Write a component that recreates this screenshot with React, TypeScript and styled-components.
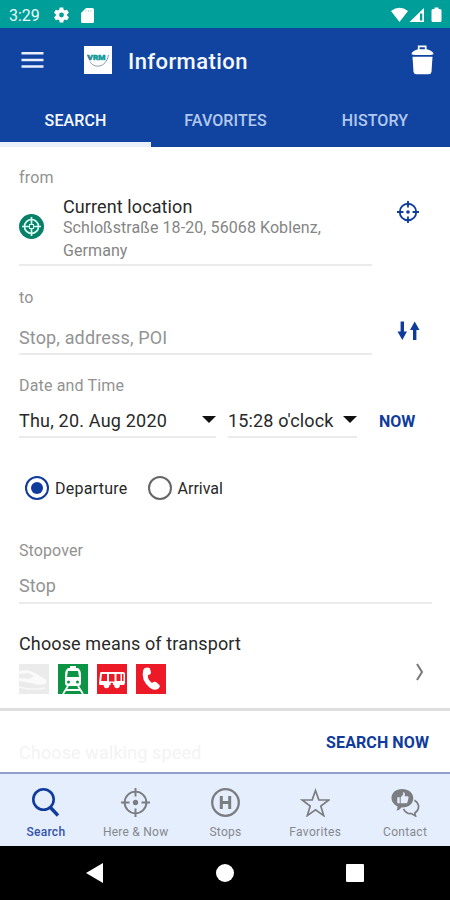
import React from "react";
import styled, { createGlobalStyle } from "styled-components";

const BLUE = "#1144a0";
const INK = "#0f3b9c";
const GREY = "#7b7d80";

const GlobalStyle = createGlobalStyle`
  * { box-sizing: border-box; }
  body { margin: 0; background: #fff; font-family: Roboto, "Liberation Sans", sans-serif; }
  svg { display: block; flex: none; }
  h1 { margin: 0; }
  button { background: none; border: 0; padding: 0; margin: 0; font: inherit; color: inherit; }
`;

const Screen = styled.div`
  width: 450px;
  height: 900px;
  display: flex;
  flex-direction: column;
  overflow: hidden;
  background: #fff;
`;

const Text = styled.span<{ $size: number; $color?: string; $spacing?: number; $weight?: number; $line?: number }>`
  display: block;
  white-space: nowrap;
  font-size: ${(p) => p.$size}px;
  line-height: ${(p) => p.$line ?? 20}px;
  color: ${(p) => p.$color ?? "#292929"};
  letter-spacing: ${(p) => p.$spacing ?? 0}px;
  font-weight: ${(p) => p.$weight ?? 400};
`;

const StatusBar = styled.header`
  height: 28px;
  flex: none;
  background: #009e99;
  display: flex;
  align-items: center;
  padding: 2px 8px 0 9px;
`;
const StatusIcons = styled.div`
  display: flex;
  align-items: center;
  margin-left: auto;
`;
const Clock = styled.div`
  padding-top: 1px;
`;
const StatusLeft = styled.div`
  display: flex;
  align-items: center;
  gap: 12px;
  margin-left: 14px;
`;

const AppBar = styled.div`
  height: 64px;
  flex: none;
  background: ${BLUE};
  display: flex;
  align-items: center;
  padding: 0 16px 0 21px;
`;
const Logo = styled.div`
  width: 28px;
  height: 28px;
  margin: 0 16px 0 40px;
  background: #fff;
`;
const Title = styled.div`
  padding-top: 3px;
`;
const TrashButton = styled.button`
  margin-left: auto;
`;

const Tabs = styled.nav`
  height: 55px;
  flex: none;
  background: ${BLUE};
  display: grid;
  grid-template-columns: 151px 1fr 150px;
`;
const Tab = styled.button<{ $active?: boolean }>`
  display: flex;
  justify-content: center;
  align-items: flex-start;
  padding-top: 19px;
  border-bottom: 5px solid ${(p) => (p.$active ? "#e9f0fa" : BLUE)};
`;

const Form = styled.main`
  height: 561px;
  flex: none;
  padding: 21px 18px 0 19px;
  overflow: hidden;
`;
const FieldRow = styled.div<{ $height: number; $top?: number }>`
  height: ${(p) => p.$height}px;
  margin-top: ${(p) => p.$top ?? 0}px;
  display: flex;
`;
const Field = styled.div<{ $width: number; $align?: string; $drop?: number }>`
  width: ${(p) => p.$width}px;
  flex: none;
  display: flex;
  align-items: ${(p) => p.$align ?? "center"};
  padding-top: ${(p) => p.$drop ?? 0}px;
  border-bottom: 2px solid #ebebeb;
`;
const PlaceIcon = styled.div`
  margin-top: 26px;
`;
const Place = styled.div`
  margin-left: 19px;
  padding-top: 9px;
`;
const SideButton = styled.button<{ $top: number }>`
  margin: ${(p) => p.$top}px 0 0 25px;
  align-self: flex-start;
`;
const Caret = styled.i`
  margin: -2px 0 0 auto;
  border: 7px solid transparent;
  border-top: 7px solid #111;
  border-bottom: 0;
`;
const Gap = styled.div`
  width: 12px;
  flex: none;
`;
const NowButton = styled.button`
  margin: 3px 0 0 22px;
`;
const Choices = styled.div`
  display: flex;
  align-items: center;
  height: 26px;
  margin: 37px 0 0 6px;
`;
const Choice = styled.label`
  display: flex;
  align-items: center;
  gap: 6px;
  margin-right: 20px;
`;
const Radio = styled.span<{ $on?: boolean }>`
  width: 24px;
  height: 24px;
  border-radius: 50%;
  border: 2px solid ${(p) => (p.$on ? INK : "#666")};
  display: grid;
  place-items: center;
  &::after {
    content: "";
    width: 12px;
    height: 12px;
    border-radius: 50%;
    background: ${(p) => (p.$on ? INK : "transparent")};
  }
`;
const ChoiceLabel = styled.div`
  padding-top: 2px;
`;
const Modes = styled.div`
  display: flex;
  gap: 9px;
  margin-top: 10px;
`;
const Mode = styled.div<{ $bg: string }>`
  width: 30px;
  height: 30px;
  background: ${(p) => p.$bg};
`;
const Chevron = styled.div`
  margin: -1px 8px 0 auto;
`;

const ActionBar = styled.div`
  height: 64px;
  flex: none;
  border-top: 3px solid #dedede;
  display: flex;
  justify-content: space-between;
  align-items: flex-start;
  padding: 22px 21px 0 19px;
`;
const Faded = styled.div`
  margin-top: 10px;
`;

const BottomNav = styled.nav`
  height: 74px;
  flex: none;
  background: #e5eefd;
  border-top: 2px solid #929ecb;
  display: grid;
  grid-template-columns: repeat(5, 1fr);
  padding-left: 1px;
`;
const NavItem = styled.button`
  display: flex;
  flex-direction: column;
  align-items: center;
  padding-top: 14px;
  gap: 6px;
`;

const SystemBar = styled.footer`
  height: 54px;
  flex: none;
  background: #000;
  display: flex;
  align-items: center;
  justify-content: space-between;
  padding: 0 86px;
`;

const Crosshair = ({ size, color, width = 2, dot = 2 }: { size: number; color: string; width?: number; dot?: number }) => (
  <svg width={size} height={size} viewBox="0 0 24 24" fill="none" stroke={color} strokeWidth={width}>
    <circle cx="12" cy="12" r="9" />
    <path d="M12 0v7M12 17v7M0 12h7M17 12h7" />
    <circle cx="12" cy="12" r={dot} fill={color} stroke="none" />
  </svg>
);

const navItems: { label: string; spacing: number; icon: React.ReactNode; active?: boolean }[] = [
  {
    label: "Search",
    spacing: 0.3,
    active: true,
    icon: (
      <svg width="28" height="29" viewBox="0 0 28 29" fill="none" stroke={INK} strokeWidth="2.6">
        <circle cx="11.5" cy="11.5" r="10.2" />
        <path d="M18 19L26 27.5" strokeWidth="3.3" />
      </svg>
    ),
  },
  { label: "Here & Now", spacing: 0.25, icon: <Crosshair size={29} color={GREY} width={1.6} dot={2.2} /> },
  {
    label: "Stops",
    spacing: 0.3,
    icon: (
      <svg width="30" height="29" viewBox="0 0 30 29" fill="none" stroke={GREY}>
        <circle cx="15.5" cy="14.5" r="13.3" strokeWidth="2.3" />
        <path d="M11.3 8v13M19.7 8v13M11.3 14.5h8.400" strokeWidth="3" />
      </svg>
    ),
  },
  {
    label: "Favorites",
    spacing: 0.35,
    icon: (
      <svg width="30" height="29" viewBox="0 0 30 29" fill="none" stroke={GREY} strokeWidth="1.7">
        <path d="M15.500 2.500l3.300 9.300 10 .200-8 6 2.900 9.600-8.200-5.700-8.200 5.700 2.900-9.600-8-6 10-.200z" />
      </svg>
    ),
  },
  {
    label: "Contact",
    spacing: 0.3,
    icon: (
      <svg width="30" height="29" viewBox="0 0 30 29" fill="none">
        <path d="M12 1C5.700 1 1.500 4.900 1.500 10.200c0 3.300 2 6 6 8.200 0 2-.5 3.200-1.200 4.200 2.600-.6 4.200-1.800 5-3.200 7.600.3 12-3.900 12-9.200S18.500 1 12 1z" fill={GREY} />
        <path d="M7.300 9.200h2.400v6H7.300zM10.700 9.200l2.400-2.400V4.200c1.800-.2 2.200 1.700 1.500 4h2.900c1 0 1.300.8 1 1.700l-1 4c-.2.8-.7 1.300-1.500 1.300h-5.300z" fill="#e5eefd" />
        <path d="M24.500 12.200c4.200 2.500 5.300 7.300 2.600 10.700-1 1.200-2 1.600-2.300 2.200l.7 2.800-4.100-2.300c-3.500.4-6-1.300-7.900-4.800" stroke={GREY} strokeWidth="1.700" />
      </svg>
    ),
  },
];

export default function App() {
  return (
    <>
      <GlobalStyle />
      <Screen>
        <StatusBar>
          <Clock><Text $size={16} $color="#e8faf8">3:29</Text></Clock>
          <StatusLeft>
            <svg width="15" height="16" viewBox="2 2 20 20" fill="#fff">
              <path d="M19.400 13c.1-.3.1-.6.1-1s0-.7-.1-1l2.100-1.600c.2-.2.3-.4.1-.7l-2-3.400c-.1-.2-.4-.3-.6-.2l-2.500 1c-.5-.4-1.100-.7-1.700-1L14.400 2.400c0-.2-.2-.4-.5-.4h-4c-.2 0-.4.2-.5.4L9 5.100c-.6.3-1.200.6-1.700 1l-2.500-1c-.2-.1-.5 0-.6.2l-2 3.400c-.1.2-.1.5.1.7L4.500 11c-.1.3-.1.7-.1 1s0 .7.1 1l-2.100 1.600c-.2.2-.3.4-.1.7l2 3.400c.1.2.4.3.6.2l2.500-1c.5.4 1.100.7 1.700 1l.4 2.700c0 .2.2.4.5.4h4c.2 0 .4-.2.5-.4l.4-2.700c.6-.3 1.200-.6 1.700-1l2.500 1c.2.1.5 0 .6-.2l2-3.400c.1-.2.1-.5-.1-.7zM12 15.200a3.200 3.200 0 1 1 0-6.400 3.200 3.200 0 0 1 0 6.400z" />
            </svg>
            <svg width="13" height="15" viewBox="0 0 13 15">
              <path d="M5 0h6.500Q13 0 13 1.500v12Q13 15 11.500 15h-10Q0 15 0 13.500V5z" fill="#fff" />
              <path d="M5 2v2M7.500 2v2M10 2v2" stroke="#b5e0de" strokeWidth="1" />
            </svg>
          </StatusLeft>
          <StatusIcons>
            <svg width="51" height="16" viewBox="0 0 51 16" fill="#fff">
              <path d="M0 4Q8.500 -2.500 17 4L8.500 15z" />
              <path d="M33 1v14H18.500z" />
              <path d="M29 6.500h2.300v7H29z" fill="#009e99" />
              <path d="M43.500 0.500h4V2H49q1.500 0 1.500 1.500v10Q50.500 15 49 15h-7q-1.500 0-1.500-1.500v-10Q40.500 2 42 2h1.500z" />
            </svg>
          </StatusIcons>
        </StatusBar>

        <AppBar>
          <svg width="23" height="18" viewBox="0 0 23 18" stroke="#e8f0ff" strokeWidth="2.5">
            <path d="M0.500 2.200h22M0.500 8.900h22M0.500 15.500h22" />
          </svg>
          <Logo>
            <svg width="28" height="28" viewBox="0 0 28 28" fill="none">
              <text x="3.500" y="14.300" fontSize="6.500" fontWeight="900" fill="#159a9a" stroke="#159a9a" strokeWidth=".4" textLength="18" lengthAdjust="spacingAndGlyphs">VRM</text>
              <path d="M3.500 9l2.800 5" stroke="#506a92" strokeWidth="1.200" />
              <path d="M6 15.500c3.500 7 16 7 18.500-6.500" stroke="#8898a8" strokeWidth="1" />
            </svg>
          </Logo>
          <Title><Text as="h1" $size={22} $weight={500} $color="#f5f8ff" $line={30} $spacing={0.42}>Information</Text></Title>
          <TrashButton aria-label="Delete">
            <svg width="23" height="30" viewBox="0 0 23 30" fill="#fff">
              <path d="M7.700 5V1.300h7V5" fill="none" stroke="#fff" strokeWidth="1.700" />
              <path d="M0.500 9.200Q0.500 6 7 4.200h9Q22.500 6 22.500 9.200L20 10H3z" />
              <path d="M1.500 11.800h20l-1 15q-.3 2.500-3 2.500h-12q-2.700 0-3-2.500z" />
            </svg>
          </TrashButton>
        </AppBar>

        <Tabs>
          <Tab $active><Text $size={16} $weight={500} $color="#f5f8ff" $spacing={0.1}>SEARCH</Text></Tab>
          <Tab><Text $size={16} $weight={500} $color="#b3c8ee" $spacing={0.1}>FAVORITES</Text></Tab>
          <Tab><Text $size={16} $weight={500} $color="#b3c8ee" $spacing={0.1}>HISTORY</Text></Tab>
        </Tabs>

        <Form>
          <Text $size={16} $color="#929292" $spacing={0.15}>from</Text>
          <FieldRow $height={78}>
            <Field $width={353} $align="flex-start">
              <PlaceIcon>
                <svg width="25" height="25" viewBox="0 0 25 25" fill="none">
                  <circle cx="12.500" cy="12.500" r="12.500" fill="#087f67" />
                  <circle cx="12.500" cy="12.500" r="7" stroke="#d8fff4" strokeWidth="1.700" />
                  <path d="M12.500 3v7M12.500 15v7M3 12.500h7M15 12.500h7" stroke="#d8fff4" strokeWidth="1.700" />
                  <rect x="10.500" y="10.500" width="4" height="4" stroke="#d8fff4" />
                </svg>
              </PlaceIcon>
              <Place>
                <Text $size={18} $spacing={0.1}>Current location</Text>
                <Text $size={16} $color="#858585" $line={21} $spacing={0.08}>Schloßstraße 18-20, 56068 Koblenz,</Text>
                <Text $size={16} $color="#858585" $line={25} $spacing={0.08}>Germany</Text>
              </Place>
            </Field>
            <SideButton $top={13} aria-label="Locate"><Crosshair size={22} color={INK} /></SideButton>
          </FieldRow>

          <FieldRow $height={20} $top={22}><Text $size={16} $color="#929292" $spacing={0.15}>to</Text></FieldRow>
          <FieldRow $height={34} $top={13}>
            <Field $width={353} $drop={2}><Text $size={18} $color="#939393" $spacing={0.15}>Stop, address, POI</Text></Field>
            <SideButton $top={0} aria-label="Swap">
              <svg width="23" height="20" viewBox="0 0 23 20" fill={INK}>
                <path d="M3.600 0.500h3.400v10H10L5.300 19 .5 10.500h3.100zM16 19h3.400V9h3.100L17.700.5 13 9h3z" />
              </svg>
            </SideButton>
          </FieldRow>

          <FieldRow $height={20} $top={21}><Text $size={16} $color="#929292" $spacing={0.15}>Date and Time</Text></FieldRow>
          <FieldRow $height={35} $top={7}>
            <Field $width={197} $drop={2}><Text $size={18} $spacing={0.2}>Thu, 20. Aug 2020</Text><Caret /></Field>
            <Gap />
            <Field $width={129} $drop={2}><Text $size={18} $spacing={0.15}>15:28 o'clock</Text><Caret /></Field>
            <NowButton><Text $size={16} $weight={700} $color={INK}>NOW</Text></NowButton>
          </FieldRow>

          <Choices>
            <Choice><Radio $on /><ChoiceLabel><Text $size={16} $spacing={0.25}>Departure</Text></ChoiceLabel></Choice>
            <Choice><Radio /><ChoiceLabel><Text $size={16}>Arrival</Text></ChoiceLabel></Choice>
          </Choices>

          <FieldRow $height={20} $top={40}><Text $size={16} $color="#929292" $spacing={0.1}>Stopover</Text></FieldRow>
          <FieldRow $height={35} $top={8}>
            <Field $width={413}><Text $size={18} $color="#939393">Stop</Text></Field>
          </FieldRow>

          <FieldRow $height={20} $top={30}><Text $size={18} $spacing={0.13}>Choose means of transport</Text></FieldRow>
          <Modes>
            <Mode $bg="#ebebeb">
              <svg width="30" height="30" viewBox="0 0 30 30">
                <path d="M0 7q10-2 16 2l10 6q3 3 0 5-6 2-14-1L0 17v-3l10 1 5-3-6-3-9 1z" fill="#fafafa" />
                <path d="M0 23q14 4 26 1" fill="none" stroke="#f8f8f8" strokeWidth="1.500" />
              </svg>
            </Mode>
            <Mode $bg="#0a9444">
              <svg width="30" height="30" viewBox="0 0 30 30" fill="#fff">
                <path d="M12 2h6v3h-6zM10 4h10q3 2 3 7v8q0 3-3 3H10q-3 0-3-3v-8q0-5 3-7z" />
                <path d="M10 7h10l1 6H9z" fill="#0a9444" />
                <circle cx="10.500" cy="18" r="1.500" fill="#0a9444" />
                <circle cx="19.500" cy="18" r="1.500" fill="#0a9444" />
                <path d="M10 22l-5 8M20 22l5 8M8 26h14" fill="none" stroke="#fff" strokeWidth="1.800" />
              </svg>
            </Mode>
            <Mode $bg="#ec1926">
              <svg width="30" height="30" viewBox="0 0 30 30" fill="#fff">
                <path d="M4 8h22q2 0 2 2v9q0 2-2 2H3q-1 0-1-2l1-9q0-2 1-2z" />
                <path d="M5 10h5v7H4.200zM12 10h5.500v7.500H12zM19.500 10h4v7h-4zM25 10h1.500v7H25z" fill="#ec1926" />
                <circle cx="9.500" cy="21.500" r="2.800" />
                <circle cx="20" cy="21.500" r="2.800" />
                <circle cx="14.800" cy="20" r="1.300" fill="#ec1926" />
              </svg>
            </Mode>
            <Mode $bg="#ec1926">
              <svg width="30" height="30" viewBox="0 0 30 30" fill="#fff">
                <path d="M8 4.500q4-2 6 0l1 4q0 2-3 2.500-1 4 4 8 2-2 4-1l3.500 3q1 2-1 3.500-4 3-9-1Q5 16 7 7z" />
              </svg>
            </Mode>
            <Chevron>
              <svg width="8" height="18" viewBox="0 0 8 18" fill="none" stroke="#777" strokeWidth="2">
                <path d="M1 1l5 8-5 8" />
              </svg>
            </Chevron>
          </Modes>
        </Form>

        <ActionBar>
          <Faded><Text $size={18} $color="#f3f3f3" $spacing={0.13}>Choose walking speed</Text></Faded>
          <button><Text $size={16} $weight={700} $color={INK} $spacing={0.1}>SEARCH NOW</Text></button>
        </ActionBar>

        <BottomNav>
          {navItems.map((n) => (
            <NavItem key={n.label}>
              {n.icon}
              <Text $size={12} $line={18} $spacing={n.spacing} $weight={n.active ? 500 : 400} $color={n.active ? "#3154aa" : "#85888d"}>{n.label}</Text>
            </NavItem>
          ))}
        </BottomNav>

        <SystemBar>
          <svg width="17" height="20" viewBox="0 0 17 20" fill="#fff"><path d="M17 0v20L0 10z" /></svg>
          <svg width="18" height="18" viewBox="0 0 18 18" fill="#fff"><circle cx="9" cy="9" r="9" /></svg>
          <svg width="18" height="18" viewBox="0 0 18 18" fill="#fff"><rect width="18" height="18" rx="1" /></svg>
        </SystemBar>
      </Screen>
    </>
  );
}
